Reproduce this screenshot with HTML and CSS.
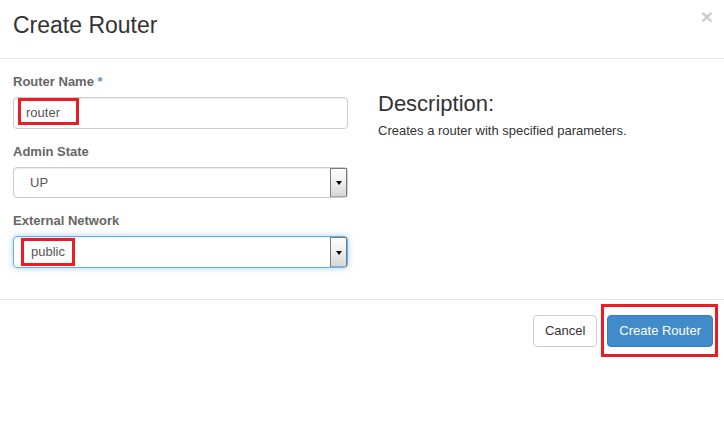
FILE: index.html
```html
<!DOCTYPE html>
<html>
<head>
<meta charset="utf-8">
<title>Create Router</title>
<link rel="stylesheet" href="styles.css">
</head>
<body>
<div class="modal">
  <div class="modal-header">
    <h3 class="modal-title">Create Router</h3>
    <span class="close">×</span>
  </div>
  <div class="modal-body">
    <div class="left">
      <div class="form-group">
        <div class="label">Router Name <span class="req">*</span></div>
        <div class="control text-input">
          <span class="mark mark-router">router</span>
        </div>
      </div>
      <div class="form-group">
        <div class="label">Admin State</div>
        <div class="control select select-short">
          <span class="value">UP</span>
          <span class="arrow"><span class="tri"></span></span>
        </div>
      </div>
      <div class="form-group">
        <div class="label">External Network</div>
        <div class="control select focus">
          <span class="value-wrap"><span class="mark mark-public">public</span></span>
          <span class="arrow"><span class="tri"></span></span>
        </div>
      </div>
    </div>
    <div class="right">
      <h3 class="desc-title">Description:</h3>
      <p class="desc">Creates a router with specified parameters.</p>
    </div>
  </div>
  <div class="modal-footer">
    <span class="btn btn-default">Cancel</span>
    <span class="btn btn-primary annotated">Create Router</span>
  </div>
</div>
</body>
</html>
```

FILE: styles.css
```css
html, body {
  margin: 0;
  padding: 0;
  background: #fff;
}
body {
  font-family: "Liberation Sans", Arial, sans-serif;
  font-size: 13px;
  color: #333;
  width: 724px;
  height: 433px;
  overflow: hidden;
}
.modal {
  width: 724px;
}
.modal-header {
  box-sizing: border-box;
  height: 59px;
  padding: 13px 11px 0 13px;
  border-bottom: 1px solid #e5e5e5;
  display: flex;
  justify-content: space-between;
  align-items: flex-start;
}
.modal-title {
  margin: 0;
  font-size: 23px;
  font-weight: normal;
  line-height: 1.1;
  color: #333;
}
.close {
  font-size: 21px;
  font-weight: bold;
  line-height: 1;
  color: #000;
  opacity: 0.2;
  margin-top: -7px;
}
.modal-body {
  display: flex;
  padding: 14px 13px 31px 13px;
}
.left {
  width: 335px;
  flex: none;
}
.right {
  margin-left: 30px;
  flex: 1;
}
.form-group {
  margin-bottom: 14px;
}
.form-group:last-child {
  margin-bottom: 0;
}
.label {
  font-weight: bold;
  line-height: 18px;
  color: #666;
  margin-bottom: 6px;
}
.req {
  color: #6d8fc4;
}
.control {
  box-sizing: border-box;
  height: 32px;
  border: 1px solid #ccc;
  border-radius: 4px;
  box-shadow: inset 0 1px 1px rgba(0,0,0,0.075);
  color: #555;
  display: flex;
  align-items: flex-start;
}
.select-short {
  height: 31px;
}
.mark {
  box-sizing: border-box;
  display: inline-block;
  border: 3px solid #ed1c24;
  color: #555;
}
.mark-router {
  width: 61px;
  height: 27px;
  margin-left: 4px;
  padding: 1px 0 0 5px;
  line-height: 21px;
}
.select {
  align-items: stretch;
}
.value {
  flex: 1;
  align-self: center;
  padding-left: 16px;
  line-height: 18px;
}
.value-wrap {
  flex: 1;
  display: flex;
  align-items: flex-start;
}
.mark-public {
  width: 54px;
  height: 28px;
  margin: 1px 0 0 7px;
  padding-left: 7px;
  line-height: 22px;
}
.arrow {
  box-sizing: border-box;
  width: 17px;
  border: 1px solid #7a7a7a;
  border-bottom-color: #a8a8a8;
  background: linear-gradient(#fdfdfd, #f0f0f0 45%, #d6d6d6);
  display: flex;
  align-items: center;
  justify-content: center;
}
.tri {
  width: 0;
  height: 0;
  border-left: 3.5px solid transparent;
  border-right: 3.5px solid transparent;
  border-top: 4px solid #000;
  margin-top: 1px;
}
.focus {
  border-color: #66afe9;
  box-shadow: inset 0 1px 1px rgba(0,0,0,0.075), 0 0 6px rgba(102,175,233,0.6);
}
.desc-title {
  margin: 19px 0 0 0;
  font-size: 22px;
  font-weight: normal;
  line-height: 1.1;
  color: #333;
}
.desc {
  margin: 6px 0 0 0;
  line-height: 18px;
  color: #333;
}
.modal-footer {
  border-top: 1px solid #e5e5e5;
  padding: 15px 11px 15px 15px;
  display: flex;
  justify-content: flex-end;
  gap: 10px;
}
.btn {
  box-sizing: border-box;
  height: 32px;
  line-height: 30px;
  padding: 0 11px;
  border: 1px solid transparent;
  border-radius: 4px;
  font-size: 13px;
  white-space: nowrap;
}
.btn-default {
  background: #fff;
  border-color: #ccc;
  color: #333;
}
.btn-primary {
  background: #428bca;
  border-color: #357ebd;
  color: #fff;
}
.annotated {
  position: relative;
}
.annotated::after {
  content: "";
  position: absolute;
  top: -12px;
  bottom: -11px;
  left: -7px;
  right: -6px;
  border: 3px solid #ed1c24;
}
```
